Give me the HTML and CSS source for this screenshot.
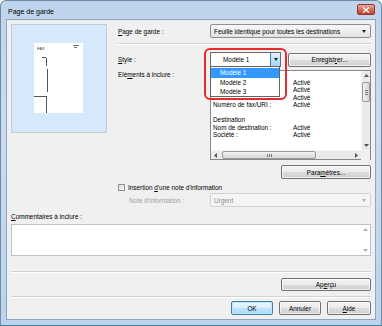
FILE: index.html
```html
<!DOCTYPE html>
<html lang="fr">
<head>
    <meta charset="UTF-8">
    <title>Page de garde</title>
    <link rel="stylesheet" href="styles.css">
</head>
<body>
    <div class="window">
        <div class="titlebar">
            <span class="title">Page de garde</span>
            <span class="close">
                <svg width="8" height="6" viewBox="0 0 8 6"><path d="M1 0.5L7 5.5M7 0.5L1 5.5" stroke="#fff" stroke-width="1.4"/></svg>
            </span>
        </div>
        <div class="client">
            <div class="top">
                <div class="preview">
                    <div class="paper">
                        <svg width="49" height="70" viewBox="0 0 49 70">
                            <text x="3" y="6.5" font-size="4" font-family="Liberation Sans" fill="#333">FAX</text>
                            <path d="M39 2.5h6M40 4.5h3" stroke="#555" stroke-width="0.8"/>
                            <path d="M8 14.5h4M12.5 15v8M13.5 26v23M0 53.5h12.5M12.5 53v17" stroke="#555" stroke-width="1" fill="none"/>
                        </svg>
                    </div>
                </div>
                <div class="form">
                    <div class="row r-page">
                        <label class="lbl"><u>P</u>age de garde :</label>
                        <div class="combo wide">
                            <span>Feuille identique pour toutes les destinations</span>
                            <i class="tri"></i>
                        </div>
                    </div>
                    <div class="sep"></div>
                    <div class="row r-style">
                        <label class="lbl"><u>S</u>tyle :</label>
                        <div class="style-wrap">
                            <div class="combo style">
                                <span>Modèle 1</span>
                                <span class="drop-btn"><i class="tri"></i></span>
                            </div>
                            <ul class="droplist">
                                <li class="sel">Modèle 1</li>
                                <li>Modèle 2</li>
                                <li>Modèle 3</li>
                            </ul>
                            <div class="callout"></div>
                        </div>
                        <button class="btn save">Enregist<u>r</u>er...</button>
                    </div>
                    <div class="row r-items">
                        <label class="lbl">Elé<u>m</u>ents à inclure :</label>
                        <div class="listbox">
                            <div class="list-body">
                                <div class="list-content">
                                    <div class="item"></div>
                                    <div class="item"><span></span>Activé</div>
                                    <div class="item"><span></span>Activé</div>
                                    <div class="item"><span></span>Activé</div>
                                    <div class="item"><span>Numéro de fax/URI :</span>Activé</div>
                                    <div class="item"></div>
                                    <div class="item"><span>Destination</span></div>
                                    <div class="item"><span>Nom de destination :</span>Activé</div>
                                    <div class="item"><span>Société :</span>Activé</div>
                                </div>
                                <div class="vscroll">
                                    <span class="arr"><svg width="5" height="3"><path d="M0 3L2.5 0L5 3Z" fill="#555"/></svg></span>
                                    <span class="vthumb"><i></i><i></i><i></i></span>
                                    <span class="vtrack"></span>
                                    <span class="arr"><svg width="5" height="3"><path d="M0 0L2.5 3L5 0Z" fill="#555"/></svg></span>
                                </div>
                            </div>
                            <div class="hscroll">
                                <span class="arr"><svg width="3" height="5"><path d="M3 0L0 2.5L3 5Z" fill="#555"/></svg></span>
                                <span class="hthumb"><i></i><i></i><i></i></span>
                                <span class="htrack"></span>
                                <span class="arr"><svg width="3" height="5"><path d="M0 0L3 2.5L0 5Z" fill="#555"/></svg></span>
                                <span class="corner"></span>
                            </div>
                        </div>
                    </div>
                    <div class="row r-param">
                        <button class="btn param">Para<u>m</u>ètres...</button>
                    </div>
                    <div class="row r-check">
                        <span class="checkbox"></span>
                        <label>Insertion <u>d</u>'une note d'information</label>
                    </div>
                    <div class="row r-note">
                        <label class="lbl sub">Note d'information :</label>
                        <div class="combo wide disabled">
                            <span>Urgent</span>
                            <i class="tri"></i>
                        </div>
                    </div>
                </div>
            </div>
            <div class="comments-label"><u>C</u>ommentaires à inclure :</div>
            <div class="textarea">
                <div class="tscroll">
                    <svg width="5" height="3"><path d="M0 3L2.5 0L5 3Z" fill="#b5b5b5"/></svg>
                    <svg width="5" height="3"><path d="M0 0L2.5 3L5 0Z" fill="#b5b5b5"/></svg>
                </div>
            </div>
            <div class="sep full s1"></div>
            <div class="btnrow preview-row">
                <button class="btn param">Ap<u>e</u>rçu</button>
            </div>
            <div class="sep full s2"></div>
            <div class="btnrow footer">
                <button class="btn ok">OK</button>
                <button class="btn">Annuler</button>
                <button class="btn help"><u>A</u>ide</button>
            </div>
        </div>
    </div>
</body>
</html>
```

FILE: styles.css
```css
/* Boite de dialogue Page de garde */
* {
    box-sizing: border-box;
}
body {
    margin: 0;
    font-family: "Liberation Sans", Arial, sans-serif;
    font-size: 6.4px;
    color: #000;
    background: #fff;
}
u {
    text-decoration: underline;
    text-underline-offset: 1px;
}
.window {
    width: 382px;
    height: 326px;
    display: flex;
    flex-direction: column;
    padding: 0 5px 5px;
    background: linear-gradient(#bfd4ec, #c9dcf1 40%, #bcd3ec);
    border: 1px solid #6f8aa8;
    border-bottom-color: #3f7fa6;
    border-radius: 6px 6px 0 0;
}
.titlebar {
    height: 18px;
    display: flex;
    justify-content: space-between;
    align-items: flex-start;
}
.title {
    font-size: 7px;
    padding: 7px 0 0 2px;
}
.close {
    width: 18px;
    height: 11px;
    margin-top: 3px;
    margin-right: 1px;
    display: flex;
    align-items: center;
    justify-content: center;
    background: linear-gradient(#e9a99b, #d2705c 50%, #c0432c);
    border: 1px solid #8c3a2e;
    border-radius: 2px;
}
.client {
    flex: 1;
    display: flex;
    flex-direction: column;
    padding: 4px 4px 3px;
    background: #f0f0f0;
    border: 1px solid #8fa5bf;
}
.top {
    display: flex;
    align-items: flex-start;
}
.preview {
    width: 96px;
    height: 109px;
    padding: 18px 0 0 22px;
    background: #d6e8fc;
    border: 1px solid #c3ccd6;
    overflow: hidden;
}
.paper {
    width: 49px;
    height: 70px;
    background: #fff;
}
.paper svg {
    display: block;
}
.form {
    width: 253px;
    margin-left: 11px;
    display: flex;
    flex-direction: column;
}
.row {
    display: flex;
    align-items: center;
}
.lbl {
    width: 92px;
    flex-shrink: 0;
}
.combo {
    height: 14px;
    display: flex;
    align-items: center;
    justify-content: space-between;
    padding: 0 4px 0 3px;
    border: 1px solid #8e8f8f;
    border-radius: 2px;
    background: linear-gradient(#f7f7f7, #ededed 50%, #e3e3e3);
}
.combo.wide {
    width: 161px;
}
.tri {
    width: 0;
    height: 0;
    border-left: 2.5px solid transparent;
    border-right: 2.5px solid transparent;
    border-top: 3px solid #222;
}
.combo.disabled {
    background: #f4f4f4;
    border-color: #d2d2d2;
    color: #8d8d8d;
}
.combo.disabled .tri {
    border-top-color: #b0b0b0;
}
.sep {
    height: 2px;
    border-top: 1px solid #d2d2d2;
    border-bottom: 1px solid #fff;
    margin-top: 5px;
}
.r-page {
    height: 14px;
}
.r-style {
    height: 15px;
    margin-top: 7px;
}
.style-wrap {
    position: relative;
}
.combo.style {
    width: 71px;
    height: 15px;
    padding: 0 0 0 12px;
    background: #fff;
    border-color: #6b6b6b;
    border-radius: 0;
}
.drop-btn {
    width: 10px;
    height: 13px;
    display: flex;
    align-items: center;
    justify-content: center;
    background: linear-gradient(#e3f3fd, #bfe1f8 50%, #a7d5f4);
    border-left: 1px solid #3c7fb1;
}
.droplist {
    position: absolute;
    top: 14px;
    left: 0;
    width: 70px;
    height: 31px;
    margin: 0;
    padding: 1px 0 0;
    list-style: none;
    background: #fff;
    border: 1px solid #646464;
    z-index: 5;
}
.droplist li {
    height: 9.5px;
    line-height: 9.5px;
    padding-left: 9px;
}
.droplist li.sel {
    background: #3399ff;
    color: #fff;
}
.callout {
    position: absolute;
    top: -4px;
    left: -6px;
    width: 83px;
    height: 52px;
    border: 2px solid #e32b2b;
    border-radius: 6px;
    z-index: 6;
}
.btn {
    height: 14px;
    padding: 0;
    font-family: inherit;
    font-size: inherit;
    color: #000;
    border: 1px solid #707070;
    border-radius: 2px;
    background: linear-gradient(#f2f2f2, #ebebeb 50%, #dddddd 51%, #cfcfcf);
    box-shadow: inset 0 0 0 1px rgba(255, 255, 255, 0.7);
}
.btn.save {
    width: 83px;
    margin-left: auto;
}
.r-items {
    margin-top: 3px;
    align-items: flex-start;
}
.r-items .lbl {
    margin-top: 1px;
    line-height: 8px;
}
.listbox {
    width: 161px;
    height: 90px;
    display: flex;
    flex-direction: column;
    background: #fff;
    border: 1px solid #828790;
}
.list-body {
    flex: 1;
    display: flex;
}
.list-content {
    flex: 1;
    padding: 0 0 0 2px;
    overflow: hidden;
}
.item {
    height: 7.5px;
    line-height: 7.5px;
    white-space: nowrap;
}
.item span {
    display: inline-block;
    width: 80px;
}
.vscroll {
    width: 9px;
    display: flex;
    flex-direction: column;
    align-items: center;
    background: #eaeaea;
    border-left: 1px solid #f4f4f4;
}
.arr {
    height: 9px;
    width: 9px;
    display: flex;
    align-items: center;
    justify-content: center;
}
.vthumb {
    width: 8px;
    height: 20px;
    margin-top: 2px;
    display: flex;
    flex-direction: column;
    align-items: center;
    justify-content: center;
    gap: 1px;
    border: 1px solid #9a9a9a;
    border-radius: 2px;
    background: linear-gradient(90deg, #f3f3f3, #e3e3e3 50%, #d7d7d7);
}
.vthumb i {
    width: 3px;
    height: 1px;
    background: #777;
}
.vtrack, .htrack {
    flex: 1;
}
.hscroll {
    height: 9px;
    display: flex;
    align-items: center;
    background: #eaeaea;
    border-top: 1px solid #f4f4f4;
}
.hthumb {
    width: 94px;
    height: 8px;
    margin-left: 2px;
    display: flex;
    align-items: center;
    justify-content: center;
    gap: 1px;
    border: 1px solid #9a9a9a;
    border-radius: 2px;
    background: linear-gradient(#f3f3f3, #e3e3e3 50%, #d7d7d7);
}
.hthumb i {
    width: 1px;
    height: 3px;
    background: #777;
}
.corner {
    width: 9px;
    height: 9px;
    background: #f0f0f0;
}
.r-param {
    margin-top: 5px;
}
.btn.param {
    width: 90px;
    margin-left: auto;
}
.r-check {
    margin-top: 4px;
    height: 9px;
}
.checkbox {
    width: 7px;
    height: 7px;
    margin-right: 3px;
    border: 1px solid #8f8f8f;
    background: linear-gradient(135deg, #dcdcdc, #fbfbfb);
}
.r-note {
    margin-top: 1px;
    height: 14px;
}
.lbl.sub {
    padding-left: 11px;
    color: #a0a0a0;
}
.comments-label {
    margin-top: 6px;
    line-height: 8px;
}
.textarea {
    height: 32px;
    margin-top: 3px;
    display: flex;
    justify-content: flex-end;
    background: #fff;
    border: 1px solid #bfc3c9;
}
.tscroll {
    width: 9px;
    display: flex;
    flex-direction: column;
    align-items: center;
    justify-content: space-between;
    padding: 3px 0;
}
.tscroll svg {
    display: block;
}
.sep.full.s1 {
    margin-top: 15px;
}
.sep.full.s2 {
    margin-top: 5px;
}
.btnrow {
    display: flex;
    justify-content: flex-end;
    gap: 6px;
}
.preview-row {
    margin-top: 5px;
}
.preview-row .btn {
    height: 13px;
}
.footer {
    margin-top: 3px;
}
.footer .btn {
    width: 42px;
}
.footer .btn.help {
    width: 44px;
}
.btn.ok {
    border-color: #3c7fb1;
    background: linear-gradient(#eaf6fd, #d9f0fc 50%, #bee6fd 51%, #a7d9f5);
    box-shadow: inset 0 0 0 1px #c4e5f6;
}
```
